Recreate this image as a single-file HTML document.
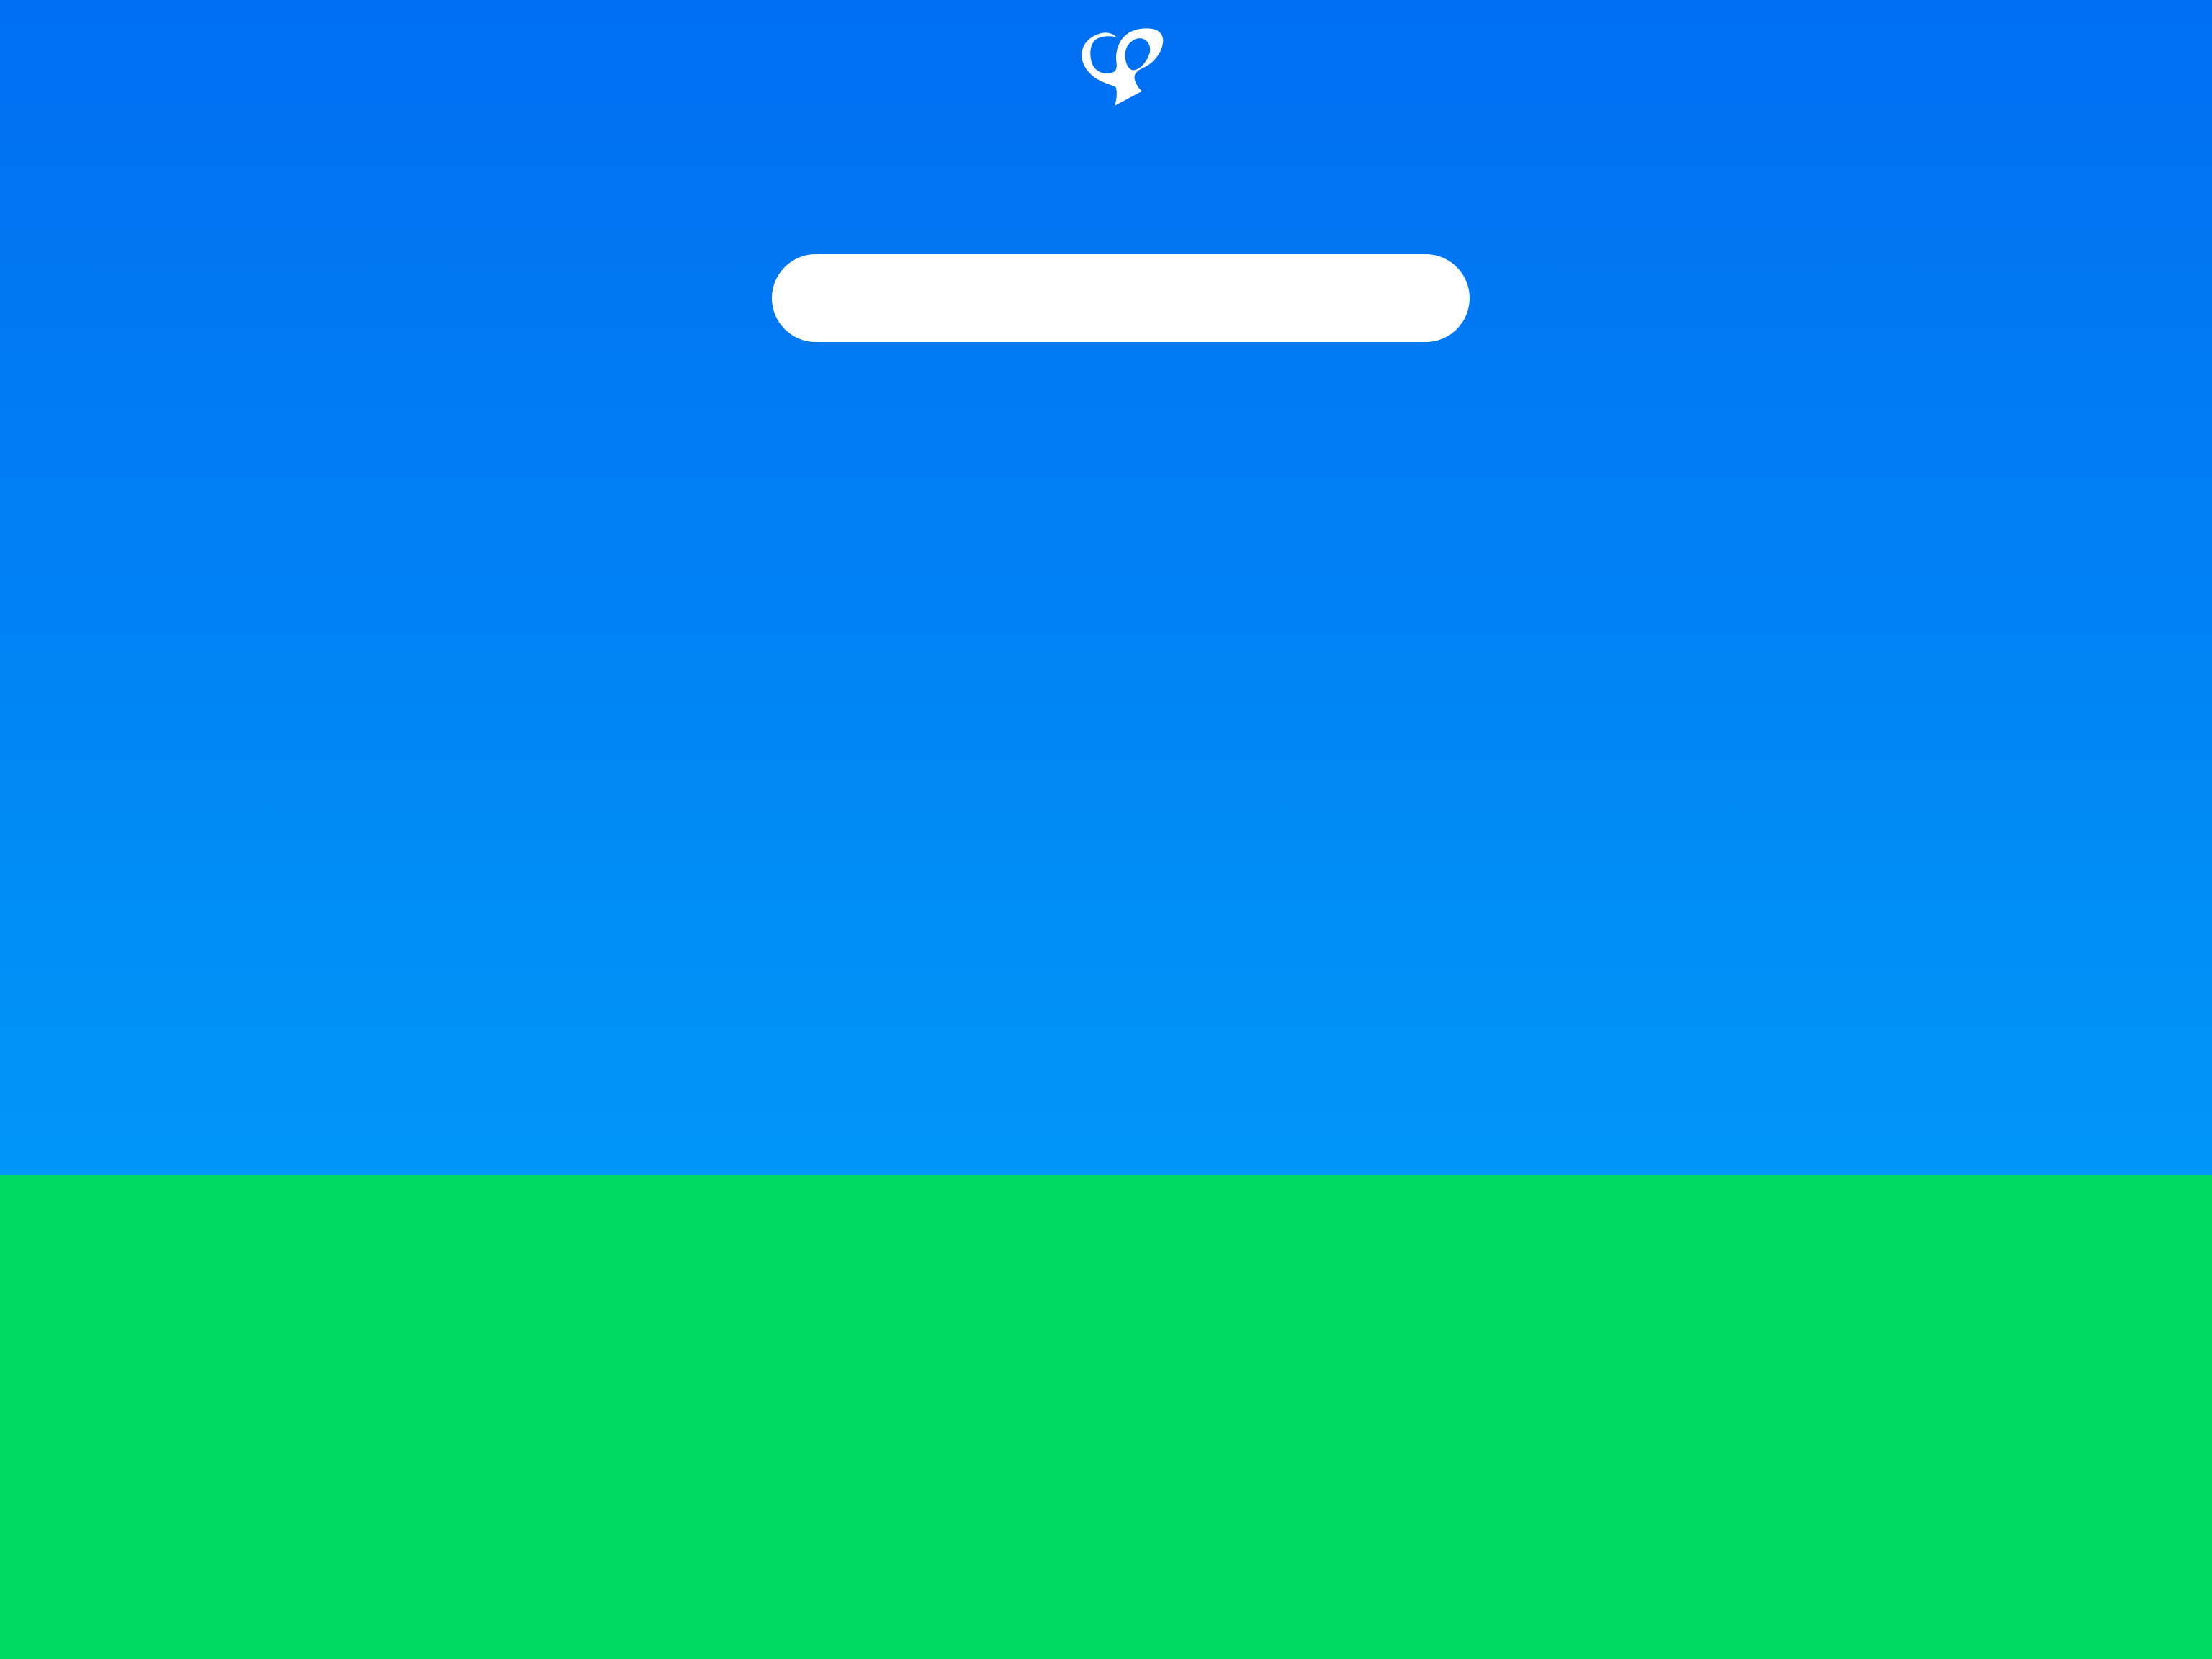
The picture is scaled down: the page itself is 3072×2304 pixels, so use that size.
<!DOCTYPE html>
<html><head><meta charset="utf-8"><style>
html,body{margin:0;padding:0;width:3072px;height:2304px;overflow:hidden}
.sky{position:absolute;left:0;top:0;width:3072px;height:1632px;background:linear-gradient(to bottom,#006EF2 0%,#0081F4 50%,#0097F7 100%)}
.grass{position:absolute;left:0;top:1632px;width:3072px;height:672px;background:#00DA64}
.bar{position:absolute;left:1072px;top:353px;width:969px;height:122px;border-radius:61px;background:#fff}
svg{position:absolute;left:1480px;top:20px}
</style></head><body>
<div class="sky"></div><div class="grass"></div>
<svg width="160" height="140" viewBox="0 0 480 420">
<path fill="#fff" fill-rule="evenodd" d="M205 380 C212 355 215 330 210 305 C200 295 150 285 120 262 C80 232 62 195 68 155 C76 110 115 85 150 78 C178 72 200 82 212 95 C185 88 150 88 125 105 C100 125 98 170 110 205 C122 235 150 248 180 246 C205 244 215 230 212 205 C205 160 218 110 255 82 C285 60 325 55 360 60 C395 66 410 90 405 120 C398 165 365 205 318 225 C292 238 280 255 290 278 C296 295 305 310 318 320 Z M300 100 C272 108 250 130 248 165 C246 200 262 235 285 232 C312 228 340 195 350 160 C358 125 335 95 300 100 Z"/>
</svg>
<div class="bar"></div>
</body></html>
